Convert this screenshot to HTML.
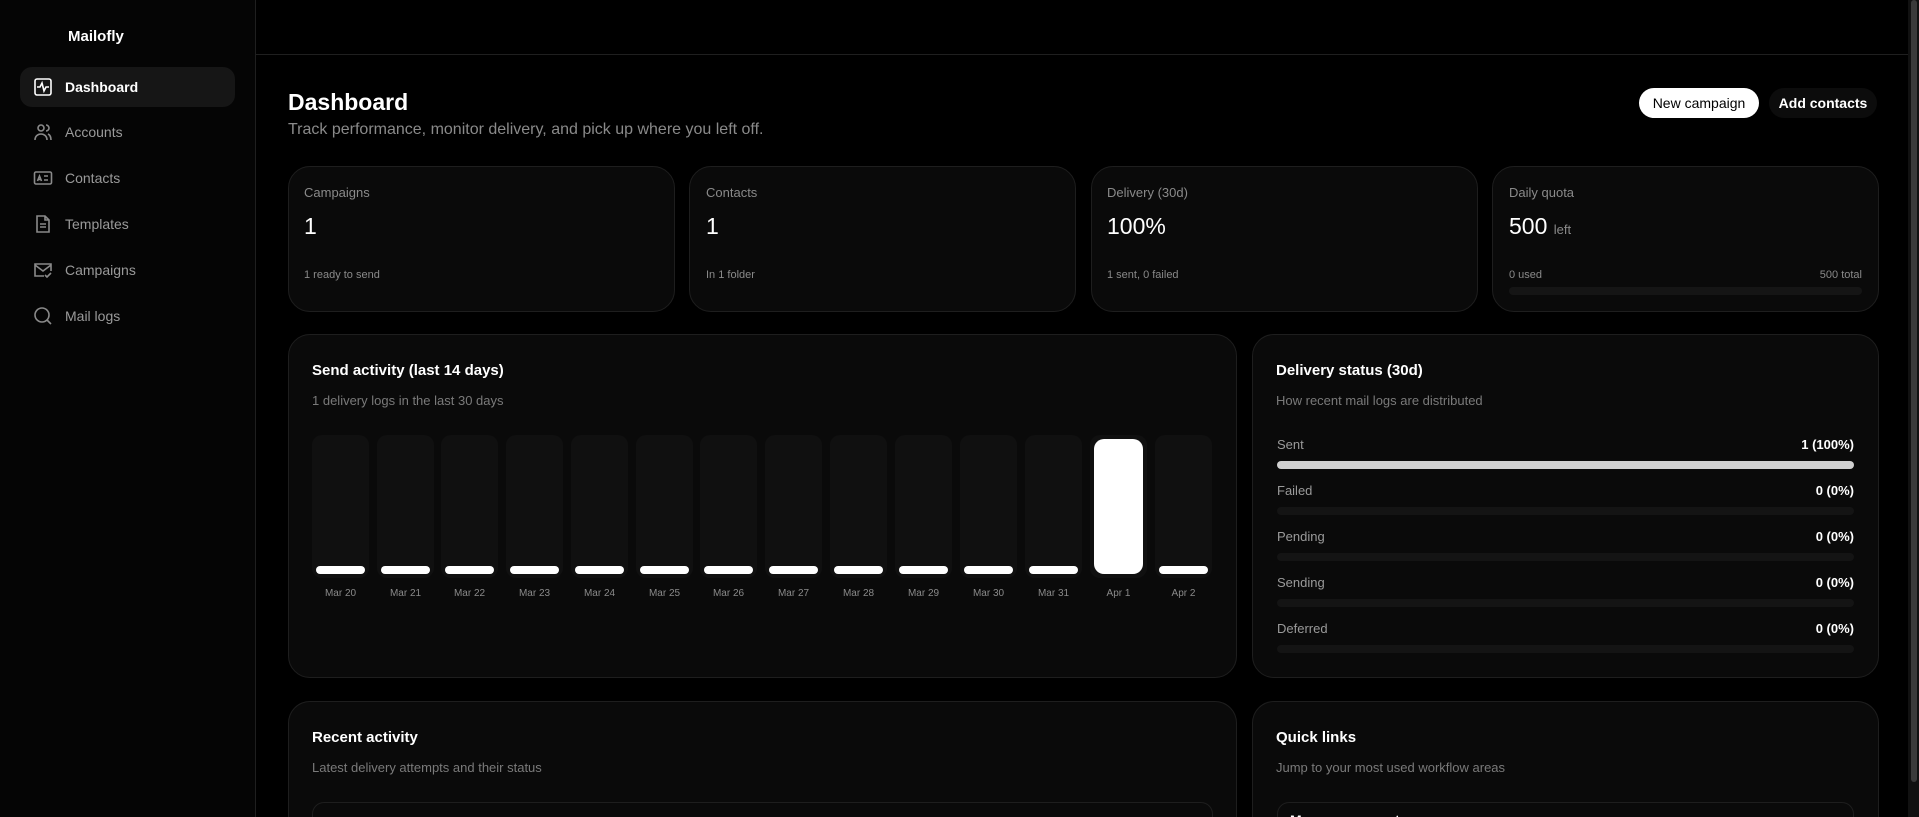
<!DOCTYPE html>
<html style="overflow:hidden;height:817px"><head><meta charset="utf-8"><style>
*{box-sizing:border-box;margin:0;padding:0}
body{width:1919px;height:817px;background:#000;overflow:hidden;font-family:"Liberation Sans",sans-serif;color:#fff;position:relative}
.a{position:absolute}
.side{left:0;top:0;width:256px;height:817px;border-right:1px solid #1f1f1f;background:#050505}
.nav{left:20px;width:215px;height:40px;border-radius:12px;display:flex;align-items:center;padding-left:13px;font-size:14px;color:#9a9a9a}
.nav svg{width:20px;height:20px;margin-right:12px;fill:none;stroke:#8a8a8a;stroke-width:1.6}
.nav.on{background:#161616;color:#fff;font-weight:bold}
.nav.on svg{stroke:#fff}
.card{background:#0a0a0a;border:1px solid #1e1e1e;border-radius:22px}
.lbl{font-size:13px;color:#8a8a8a}
.val{font-size:23px;color:#fff}
.sm{font-size:11px;color:#8a8a8a}
.ttl{font-size:15px;font-weight:bold;color:#fff}
.sub{font-size:13px;color:#7a7a7a}
.col{top:435px;width:57px;height:143px;background:#101010;border-radius:10px}
.pill{position:absolute;left:4px;right:4px;bottom:4px;height:8px;background:#fff;border-radius:4px}
.dl{font-size:10px;color:#8a8a8a;top:588px;width:57px;text-align:center}
.row{left:1277px;width:577px;font-size:13px;color:#9a9a9a;display:flex;justify-content:space-between}
.row b{color:#fff;font-weight:bold}
.trk{left:1277px;width:577px;height:8px;border-radius:4px;background:#141414}
</style></head><body>
<div class="a side"></div>
<div class="a" style="left:256px;top:54px;width:1652px;height:1px;background:#1f1f1f"></div>
<div class="a" style="left:68px;top:28px;font-size:15px;font-weight:bold">Mailofly</div>

<div class="a nav on" style="top:67px"><svg viewBox="0 0 20 20"><rect x="2" y="2" width="16" height="16" rx="2"/><path d="M4 10h3l2-4 2 8 2-4h3"/></svg>Dashboard</div>
<div class="a nav" style="top:112px"><svg viewBox="0 0 20 20"><circle cx="8" cy="6" r="3"/><path d="M2 18c0-4 3-6 6-6s6 2 6 6M13 3a3 3 0 010 6M15 12c2 1 3 3 3 6"/></svg>Accounts</div>
<div class="a nav" style="top:158px"><svg viewBox="0 0 20 20"><rect x="1.5" y="4" width="17" height="12" rx="1.5"/><path d="M4.5 13l2-5 2 5M5 11.5h3M11 8h4M11 12h4"/></svg>Contacts</div>
<div class="a nav" style="top:204px"><svg viewBox="0 0 20 20"><path d="M4 2h8l4 4v12H4z M12 2v4h4M7 10h6M7 13h6"/></svg>Templates</div>
<div class="a nav" style="top:250px"><svg viewBox="0 0 20 20"><path d="M11 16H2V4h16v7M2 5l8 6 8-6M12 15l2 2 4-4"/></svg>Campaigns</div>
<div class="a nav" style="top:296px"><svg viewBox="0 0 20 20"><circle cx="9" cy="9" r="7"/><path d="M14 14l4 4"/></svg>Mail logs</div>

<div class="a" style="left:288px;top:89px;font-size:23px;font-weight:bold">Dashboard</div>
<div class="a" style="left:288px;top:121px;font-size:16px;color:#8a8a8a">Track performance, monitor delivery, and pick up where you left off.</div>
<div class="a" style="left:1639px;top:88px;width:120px;height:30px;border-radius:15px;background:#fff;color:#000;font-size:14px;text-align:center;line-height:30px">New campaign</div>
<div class="a" style="left:1769px;top:88px;width:108px;height:30px;border-radius:15px;background:#0c0c0c;color:#fff;font-size:14px;font-weight:bold;text-align:center;line-height:30px">Add contacts</div>

<div class="a card" style="left:288px;top:166px;width:387px;height:146px"></div>
<div class="a card" style="left:689px;top:166px;width:387px;height:146px"></div>
<div class="a card" style="left:1091px;top:166px;width:387px;height:146px"></div>
<div class="a card" style="left:1492px;top:166px;width:387px;height:146px"></div>
<div class="a lbl" style="left:304px;top:185px">Campaigns</div>
<div class="a val" style="left:304px;top:213px">1</div>
<div class="a sm" style="left:304px;top:269px">1 ready to send</div>
<div class="a lbl" style="left:706px;top:185px">Contacts</div>
<div class="a val" style="left:706px;top:213px">1</div>
<div class="a sm" style="left:706px;top:269px">In 1 folder</div>
<div class="a lbl" style="left:1107px;top:185px">Delivery (30d)</div>
<div class="a val" style="left:1107px;top:213px">100%</div>
<div class="a sm" style="left:1107px;top:269px">1 sent, 0 failed</div>
<div class="a lbl" style="left:1509px;top:185px">Daily quota</div>
<div class="a val" style="left:1509px;top:213px">500 <span style="font-size:13px;color:#8a8a8a">left</span></div>
<div class="a sm" style="left:1509px;top:269px">0 used</div>
<div class="a sm" style="left:1790px;top:269px;width:72px;text-align:right">500 total</div>
<div class="a" style="left:1509px;top:287px;width:353px;height:8px;border-radius:4px;background:#151515"></div>

<div class="a card" style="left:288px;top:334px;width:949px;height:344px"></div>
<div class="a card" style="left:1252px;top:334px;width:627px;height:344px"></div>
<div class="a ttl" style="left:312px;top:362px">Send activity (last 14 days)</div>
<div class="a sub" style="left:312px;top:393px">1 delivery logs in the last 30 days</div>

<div class="a col" style="left:312px"><div class="pill"></div></div>
<div class="a col" style="left:377px"><div class="pill"></div></div>
<div class="a col" style="left:441px"><div class="pill"></div></div>
<div class="a col" style="left:506px"><div class="pill"></div></div>
<div class="a col" style="left:571px"><div class="pill"></div></div>
<div class="a col" style="left:636px"><div class="pill"></div></div>
<div class="a col" style="left:700px"><div class="pill"></div></div>
<div class="a col" style="left:765px"><div class="pill"></div></div>
<div class="a col" style="left:830px"><div class="pill"></div></div>
<div class="a col" style="left:895px"><div class="pill"></div></div>
<div class="a col" style="left:960px"><div class="pill"></div></div>
<div class="a col" style="left:1025px"><div class="pill"></div></div>
<div class="a col" style="left:1090px"><div class="pill" style="top:4px;height:auto;border-radius:10px"></div></div>
<div class="a col" style="left:1155px"><div class="pill"></div></div>
<div class="a dl" style="left:312px">Mar 20</div><div class="a dl" style="left:377px">Mar 21</div><div class="a dl" style="left:441px">Mar 22</div><div class="a dl" style="left:506px">Mar 23</div><div class="a dl" style="left:571px">Mar 24</div><div class="a dl" style="left:636px">Mar 25</div><div class="a dl" style="left:700px">Mar 26</div><div class="a dl" style="left:765px">Mar 27</div><div class="a dl" style="left:830px">Mar 28</div><div class="a dl" style="left:895px">Mar 29</div><div class="a dl" style="left:960px">Mar 30</div><div class="a dl" style="left:1025px">Mar 31</div><div class="a dl" style="left:1090px">Apr 1</div><div class="a dl" style="left:1155px">Apr 2</div>

<div class="a ttl" style="left:1276px;top:362px">Delivery status (30d)</div>
<div class="a sub" style="left:1276px;top:393px">How recent mail logs are distributed</div>
<div class="a row" style="top:437px"><span>Sent</span><b>1 (100%)</b></div>
<div class="a trk" style="top:461px;background:#d0d0d0"></div>
<div class="a row" style="top:483px"><span>Failed</span><b>0 (0%)</b></div>
<div class="a trk" style="top:507px"></div>
<div class="a row" style="top:529px"><span>Pending</span><b>0 (0%)</b></div>
<div class="a trk" style="top:553px"></div>
<div class="a row" style="top:575px"><span>Sending</span><b>0 (0%)</b></div>
<div class="a trk" style="top:599px"></div>
<div class="a row" style="top:621px"><span>Deferred</span><b>0 (0%)</b></div>
<div class="a trk" style="top:645px"></div>

<div class="a card" style="left:288px;top:701px;width:949px;height:116px;border-bottom:none;border-radius:22px 22px 0 0"></div>
<div class="a card" style="left:1252px;top:701px;width:627px;height:116px;border-bottom:none;border-radius:22px 22px 0 0"></div>
<div class="a ttl" style="left:312px;top:729px">Recent activity</div>
<div class="a sub" style="left:312px;top:760px">Latest delivery attempts and their status</div>
<div class="a" style="left:312px;top:802px;width:901px;height:15px;border:1px solid #1e1e1e;border-bottom:none;border-radius:12px 12px 0 0"></div>
<div class="a ttl" style="left:1276px;top:729px">Quick links</div>
<div class="a sub" style="left:1276px;top:760px">Jump to your most used workflow areas</div>
<div class="a" style="left:1277px;top:802px;width:577px;height:15px;border:1px solid #1e1e1e;border-bottom:none;border-radius:12px 12px 0 0;overflow:hidden;padding:9px 12px;font-size:14px;font-weight:bold">Manage accounts</div>

<div class="a" style="left:1908px;top:0;width:11px;height:817px;background:#111"></div>
<div class="a" style="left:1911px;top:0;width:6px;height:782px;background:#3a3a3a;border-radius:3px"></div>
</body></html>
